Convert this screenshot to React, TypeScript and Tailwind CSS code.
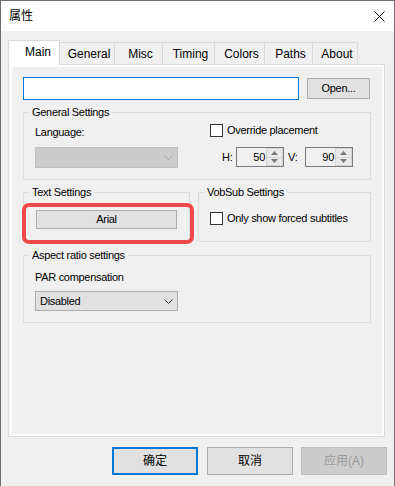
import type { ReactNode } from "react";

const dlgFont =
  "font-['Liberation_Sans',Arial,sans-serif] text-[11px] tracking-[-0.3px] leading-[13px] text-black";
const cjkFont =
  "font-['Liberation_Sans','Noto_Sans_CJK_SC',sans-serif] text-[12px] text-black";

const tabs = [
  { label: "General", w: "w-[56px]" },
  { label: "Misc", w: "w-[49px]" },
  { label: "Timing", w: "w-[53px]" },
  { label: "Colors", w: "w-[51px]" },
  { label: "Paths", w: "w-[49px]" },
  { label: "About", w: "w-[46px]" },
];

function Group({
  title,
  className,
  children,
}: {
  title: string;
  className: string;
  children: ReactNode;
}) {
  return (
    <fieldset className={`border border-[#dcdcdc] ${className}`}>
      <legend className="ml-[5px] px-[3px]">{title}</legend>
      {children}
    </fieldset>
  );
}

function Chevron({ color }: { color: string }) {
  return (
    <svg width="9" height="5" viewBox="0 0 9 5">
      <polyline points="0.5,0.5 4.5,4.5 8.5,0.5" fill="none" stroke={color} strokeWidth="1" />
    </svg>
  );
}

function Checkbox({ label }: { label: string }) {
  return (
    <div className="flex items-center">
      <div className="h-[13px] w-[13px] border border-[#333333] bg-white" />
      <span className="ml-[4px]">{label}</span>
    </div>
  );
}

function Spin({ value }: { value: string }) {
  return (
    <div className="flex h-[20px] w-[48px] border border-[#7a7a7a] bg-[#f0f0f0]">
      <div className="flex flex-1 items-center justify-end pr-[1px]">{value}</div>
      <div className="flex w-[17px] flex-col">
        <div className="flex flex-1 items-center justify-center border border-[#d4d4d4] bg-[#e9e9e9]">
          <svg width="7" height="4" viewBox="0 0 7 4">
            <polygon points="3.5,0 7,4 0,4" fill="#7a7a7a" />
          </svg>
        </div>
        <div className="flex flex-1 items-center justify-center border border-t-0 border-[#d4d4d4] bg-[#e9e9e9]">
          <svg width="7" height="4" viewBox="0 0 7 4">
            <polygon points="0,0 7,0 3.5,4" fill="#7a7a7a" />
          </svg>
        </div>
      </div>
    </div>
  );
}

export default function App() {
  return (
    <div className="relative flex h-[486px] w-[395px] flex-col overflow-hidden border-x border-t border-[#707070] bg-[#f0f0f0]">
      {/* title bar */}
      <div className="flex h-[30px] items-center bg-white">
        <span className={`ml-[8px] ${cjkFont}`}>属性</span>
        <svg className="ml-auto mr-[9px]" width="11" height="11" viewBox="0 0 11 11">
          <path d="M0.5 0.5 L10.5 10.5 M10.5 0.5 L0.5 10.5" stroke="#000" strokeWidth="1" />
        </svg>
      </div>

      <div className="flex flex-1 flex-col pt-[9px]">
        {/* tabs */}
        <div className="flex items-end pl-[7px] font-['Liberation_Sans',Arial,sans-serif] text-[12px] text-black">
          <div className="relative z-10 -mb-px flex h-[25px] w-[52px] items-center justify-center border border-b-0 border-[#d9d9d9] bg-white pb-[2px] pl-[8px]">
            Main
          </div>
          {tabs.map((t) => (
            <div
              key={t.label}
              className={`-ml-px flex h-[22px] items-center justify-center border border-b-0 border-[#d9d9d9] bg-[#f0f0f0] pl-[4px] ${t.w}`}
            >
              {t.label}
            </div>
          ))}
        </div>

        {/* tab panel */}
        <div className="ml-[7px] h-[373px] w-[377px] border border-[#d9d9d9] bg-white pb-[2px] pl-[3px] pr-[2px] pt-[2px]">
          <div className={`h-full bg-[#f0f0f0] pl-[11px] pt-[10px] ${dlgFont}`}>
            <div className="flex items-center">
              <div className="h-[23px] w-[276px] border border-[#0078d7] bg-white" />
              <button
                type="button"
                className="ml-[8px] h-[21px] w-[63px] border border-[#adadad] bg-[#e1e1e1]"
              >
                Open...
              </button>
            </div>

            <Group title="General Settings" className="mt-[6px] w-[348px]">
              <div className="flex pb-[11px] pl-[11px]">
                <div className="flex w-[143px] flex-col">
                  <span className="mt-[7px]">Language:</span>
                  <div className="mt-[8px] flex h-[21px] items-center justify-end border border-[#bfbfbf] bg-[#cccccc] pr-[4px]">
                    <Chevron color="#a6a6a6" />
                  </div>
                </div>
                <div className="ml-[32px] flex flex-col">
                  <div className="mt-[5px]">
                    <Checkbox label="Override placement" />
                  </div>
                  <div className="mt-[10px] flex items-center">
                    <span className="ml-[12px] w-[14px]">H:</span>
                    <Spin value="50" />
                    <span className="ml-[4px] w-[17px]">V:</span>
                    <Spin value="90" />
                  </div>
                </div>
              </div>
            </Group>

            <div className="mt-[6px] flex items-stretch">
              <Group title="Text Settings" className="w-[167px]">
                <div className="pb-[12px] pl-[12px] pt-[11px]">
                  <button
                    type="button"
                    className="h-[19px] w-[141px] border border-[#adadad] bg-[#e1e1e1]"
                  >
                    Arial
                  </button>
                </div>
              </Group>
              <Group title="VobSub Settings" className="ml-[8px] w-[173px]">
                <div className="pb-[16px] pl-[11px] pt-[13px]">
                  <Checkbox label="Only show forced subtitles" />
                </div>
              </Group>
            </div>

            <Group title="Aspect ratio settings" className="mt-[7px] w-[348px]">
              <div className="flex flex-col pb-[11px] pl-[11px]">
                <span className="mt-[9px]">PAR compensation</span>
                <div className="mt-[7px] flex h-[20px] w-[143px] items-center border border-[#adadad] bg-[#e1e1e1] pl-[4px] pr-[4px]">
                  <span className="flex-1">Disabled</span>
                  <Chevron color="#333333" />
                </div>
              </div>
            </Group>
          </div>
        </div>

        {/* dialog buttons */}
        <div className={`mt-[10px] flex pl-[111px] ${cjkFont}`}>
          <button
            type="button"
            className="h-[28px] w-[86px] border-2 border-[#0078d7] bg-[#e1e1e1]"
          >
            确定
          </button>
          <button
            type="button"
            className="ml-[9px] h-[28px] w-[86px] border border-[#adadad] bg-[#e1e1e1]"
          >
            取消
          </button>
          <button
            type="button"
            className="ml-[8px] h-[28px] w-[86px] border border-[#bfbfbf] bg-[#cccccc] text-[#9a9a9a]"
          >
            应用(A)
          </button>
        </div>
      </div>

      {/* highlight annotation */}
      <div className="absolute left-[21px] top-[202px] h-[41px] w-[172px] rounded-[7px] border-4 border-[#ef4848]" />
    </div>
  );
}
